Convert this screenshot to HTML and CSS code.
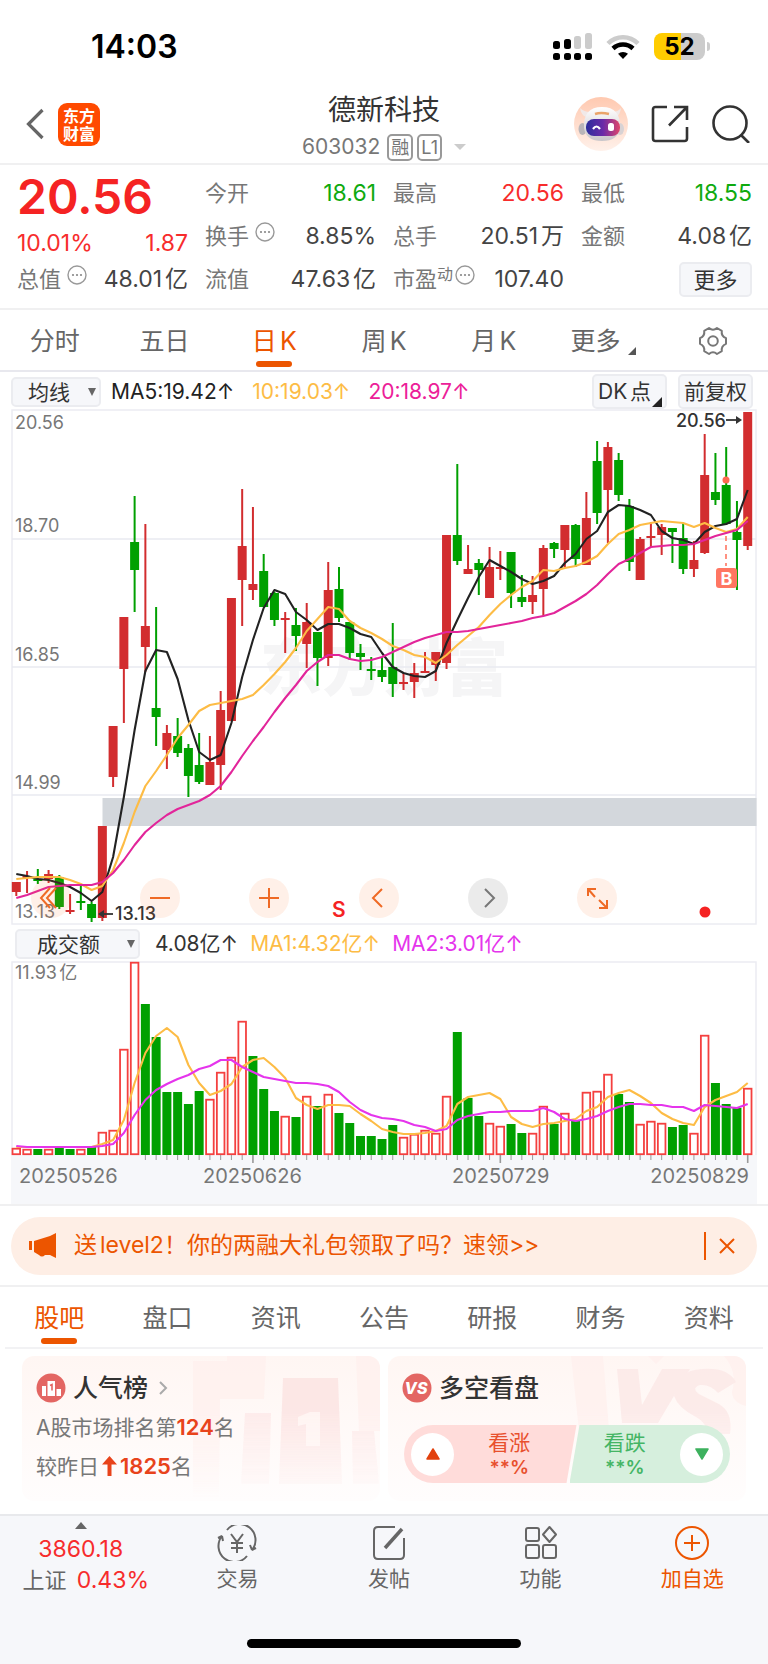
FILE: index.html
```html
<!DOCTYPE html>
<html lang="zh-CN">
<head>
    <meta charset="UTF-8">
    <meta name="viewport" content="width=device-width, initial-scale=1.0">
    <title>德新科技 603032</title>
    <link rel="stylesheet" href="styles.css">
</head>
<body>
    <svg width="0" height="0" class="sprite" aria-hidden="true">
        <symbol id="dots" viewBox="0 0 20 20">
            <circle cx="10" cy="10" r="9" fill="none" stroke="#999" stroke-width="1.4"/>
            <circle cx="6" cy="10" r="1.1" fill="#888"/>
            <circle cx="10" cy="10" r="1.1" fill="#888"/>
            <circle cx="14" cy="10" r="1.1" fill="#888"/>
        </symbol>
    </svg>

    <div class="status-bar">
        <span class="time">14:03</span>
        <div class="status-icons">
            <svg width="39" height="28" viewBox="0 0 39 28">
                <g fill="#000">
                    <rect x="0" y="8" width="7" height="8" rx="2.5"/>
                    <rect x="11" y="6" width="7" height="10" rx="2.5"/>
                    <rect x="0" y="20" width="7" height="7" rx="2.5"/>
                    <rect x="11" y="20" width="7" height="7" rx="2.5"/>
                    <rect x="21" y="20" width="7" height="7" rx="2.5"/>
                    <rect x="32" y="20" width="7" height="7" rx="2.5"/>
                </g>
                <rect x="21" y="3" width="7" height="13" rx="2.5" fill="#ccc"/>
                <rect x="32" y="0" width="7" height="16" rx="2.5" fill="#ccc"/>
            </svg>
            <svg width="34" height="26" viewBox="0 0 34 26" fill="none">
                <path d="M2 9.500A21 21 0 0 1 32 9.500" stroke="#ccc" stroke-width="4.500"/>
                <path d="M7 14.500A14.500 14.500 0 0 1 27 14.500" stroke="#000" stroke-width="4.500"/>
                <path d="M17 25l-5-5.200a7.500 7.500 0 0 1 10 0z" fill="#000"/>
            </svg>
            <div class="battery"><span>52</span></div>
        </div>
    </div>

    <header class="header">
        <div class="header-left">
            <button class="icon-btn" aria-label="返回">
                <svg width="18" height="32" viewBox="0 0 18 32" fill="none" stroke="#666" stroke-width="3.200"><path d="M16.500 2L2.500 16l14 14"/></svg>
            </button>
            <a href="#" class="logo">东方<br>财富</a>
        </div>
        <div class="header-title">
            <h1>德新科技</h1>
            <div class="code">603032 <span class="tag">融</span><span class="tag">L1</span><i class="caret"></i></div>
        </div>
        <div class="header-right">
            <button class="icon-btn" aria-label="助手">
                <svg width="54" height="54" viewBox="0 0 54 54">
                    <defs>
                        <linearGradient id="halo" x1="0" y1="0" x2="0" y2="1"><stop offset="0" stop-color="#ffc9b0"/><stop offset="1" stop-color="#fff1ea"/></linearGradient>
                        <linearGradient id="visor"><stop offset="0" stop-color="#2b2d9c"/><stop offset=".5" stop-color="#6a2ba8"/><stop offset="1" stop-color="#e0466a"/></linearGradient>
                        <linearGradient id="shell" x1="0" y1="0" x2="0" y2="1"><stop offset="0" stop-color="#fff"/><stop offset="1" stop-color="#c9c6ca"/></linearGradient>
                    </defs>
                    <circle cx="27" cy="27" r="27" fill="url(#halo)"/>
                    <path d="M6 11q1 7 6 9l4-5q-6 0-10-4zM47 11q-1 7-5 9l-4-5q6 0 9-4z" fill="#f1e9e8"/>
                    <ellipse cx="8.500" cy="32" rx="4" ry="6" fill="#b9b5b9"/>
                    <ellipse cx="46" cy="32" rx="4" ry="6" fill="#d8d2d4"/>
                    <path d="M10 31Q9 10 28 10T46 31Q44 44 28 44T10 31z" fill="url(#shell)"/>
                    <path d="M21 17q6-2 14 0" stroke="#eaa46a" stroke-width="2.500" fill="none"/>
                    <rect x="12" y="22" width="34" height="17" rx="8" fill="url(#visor)"/>
                    <path d="M19 32q3.500-5 7 0" stroke="#fff" stroke-width="2.200" fill="none"/>
                    <rect x="34" y="26" width="6" height="8" rx="2.500" fill="#fff"/>
                </svg>
            </button>
            <button class="icon-btn" aria-label="分享">
                <svg width="38" height="38" viewBox="0 0 38 38" fill="none" stroke="#333" stroke-width="2.600"><path d="M16 2H4.500Q2 2 2 4.500v29Q2 36 4.500 36h29q2.500 0 2.500-2.500V22M23 2h13v13M36 2L18 20.500"/></svg>
            </button>
            <button class="icon-btn" aria-label="搜索">
                <svg width="38" height="38" viewBox="0 0 38 38" fill="none" stroke="#333" stroke-width="2.600"><circle cx="18" cy="18" r="16.500"/><path d="M29.500 30.500L37 38"/></svg>
            </button>
        </div>
    </header>

    <section class="quote">
        <div class="quote-col">
            <div class="price">20.56</div>
            <div class="change"><span>10.01%</span><span>1.87</span></div>
            <div class="quote-row"><span class="label">总值<svg class="dots"><use href="#dots"/></svg></span><span>48.01亿</span></div>
        </div>
        <div class="quote-col">
            <div class="quote-row"><span class="label">今开</span><span class="green">18.61</span></div>
            <div class="quote-row"><span class="label">换手<svg class="dots"><use href="#dots"/></svg></span><span>8.85%</span></div>
            <div class="quote-row"><span class="label">流值</span><span>47.63亿</span></div>
        </div>
        <div class="quote-col">
            <div class="quote-row"><span class="label">最高</span><span class="red">20.56</span></div>
            <div class="quote-row"><span class="label">总手</span><span>20.51万</span></div>
            <div class="quote-row"><span class="label">市盈<small>动</small><svg class="dots"><use href="#dots"/></svg></span><span>107.40</span></div>
        </div>
        <div class="quote-col">
            <div class="quote-row"><span class="label">最低</span><span class="green">18.55</span></div>
            <div class="quote-row"><span class="label">金额</span><span>4.08亿</span></div>
            <div class="quote-row"><span></span><button class="more-btn">更多</button></div>
        </div>
    </section>

    <nav class="tabs period-tabs">
        <a href="#">分时</a>
        <a href="#">五日</a>
        <a href="#" class="active">日K</a>
        <a href="#">周K</a>
        <a href="#">月K</a>
        <a href="#" class="with-corner">更多<i class="corner"></i></a>
        <a href="#" aria-label="设置">
            <svg width="30" height="30" viewBox="0 0 30 30" fill="none" stroke="#777" stroke-width="2" stroke-linejoin="round"><path d="M11 2Q15 5.500 19 2L23.800 4.800Q23 10 28 12.200V17.800Q23 20 23.800 25.200L19 28Q15 24.500 11 28L6.200 25.200Q7 20 2 17.800V12.200Q7 10 6.200 4.800Z"/><circle cx="15" cy="15" r="4.800"/></svg>
        </a>
    </nav>

    <main class="chart">
        <div class="indicator">
            <div class="select">
                <select aria-label="主图指标"><option>均线</option></select>
            </div>
            <span class="ma5">MA5:19.42↑</span>
            <span class="ma10">10:19.03↑</span>
            <span class="ma20">20:18.97↑</span>
            <div class="indicator-btns">
                <button>DK点<i class="corner"></i></button>
                <button>前复权</button>
            </div>
        </div>

        <div class="kline">
            <svg id="kline" viewBox="11 409 746 516"></svg>
            <div class="kline-tools">
                <button aria-label="最左"><svg viewBox="0 0 40 40"><path d="M19 10l-9 10 9 10M25 10l-9 10 9 10"/></svg></button>
                <button aria-label="缩小"><svg viewBox="0 0 40 40"><path d="M10 20h20"/></svg></button>
                <button aria-label="放大"><svg viewBox="0 0 40 40"><path d="M10 20h20M20 10v20"/></svg></button>
                <button aria-label="左移"><svg viewBox="0 0 40 40"><path d="M23 11l-9 9 9 9"/></svg></button>
                <button aria-label="右移" class="disabled"><svg viewBox="0 0 40 40"><path d="M17 11l9 9-9 9"/></svg></button>
                <button aria-label="全屏"><svg viewBox="0 0 40 40"><path d="M11 18v-7h8M11 11l7 8M22 22l7 7M30 22v8h-8"/></svg></button>
            </div>
        </div>

        <div class="indicator volume-indicator">
            <div class="select">
                <select aria-label="副图指标"><option>成交额</option></select>
            </div>
            <span class="amount">4.08亿↑</span>
            <span class="ma10 vol-ma1">MA1:4.32亿↑</span>
            <span class="vol-ma2">MA2:3.01亿↑</span>
        </div>
        <svg id="volume" viewBox="11 961 746 243"></svg>
    </main>

    <div class="banner-wrap">
        <div class="banner">
            <svg width="28" height="26" viewBox="0 0 28 26" fill="#ec5500"><path d="M0 8h3v9H0zM5 8l16-5 6-3v25l-6-3h-5q-3 3-6 0l-5-3z"/></svg>
            <a href="#">送level2！你的两融大礼包领取了吗？速领&gt;&gt;</a>
            <button class="close" aria-label="关闭">
                <svg width="16" height="16" viewBox="0 0 16 16" stroke="#ec5500" stroke-width="2"><path d="M1 1l14 14M15 1L1 15"/></svg>
            </button>
        </div>
    </div>

    <nav class="tabs info-tabs">
        <a href="#" class="active">股吧</a>
        <a href="#">盘口</a>
        <a href="#">资讯</a>
        <a href="#">公告</a>
        <a href="#">研报</a>
        <a href="#">财务</a>
        <a href="#">资料</a>
    </nav>

    <section class="cards">
        <article class="card">
            <svg class="card-bg" viewBox="0 0 190 144">
                <path d="M3 5h34V0h39l-2 43H30l-1 101H3z" fill="#fff0ee"/>
                <path d="M166 0h24v75h-21z" fill="#fff0ee"/>
                <g fill="#fce3e2">
                    <path d="M55 57h26l-2 71H51z" opacity=".7"/>
                    <path d="M93 22h55l4 106H89z"/>
                    <path d="M162 75h22l5 53h-26z" opacity=".7"/>
                </g>
                <path d="M108 61l12-5h10v34h-14V68l-8 2z" fill="#fff3f1"/>
            </svg>
            <h2>
                <svg width="30" height="30" viewBox="0 0 30 30"><circle cx="15" cy="15" r="14.500" fill="#e36663"/><path d="M6 13h4v10H6zM11.500 8h7.500v15h-7.500zM20.500 16H25v7h-4.500z" fill="#fff"/><path d="M14 12.500l2-1v6" stroke="#e36663" stroke-width="1.600" fill="none"/></svg>
                人气榜
                <svg width="9" height="14" viewBox="0 0 9 14" class="arrow" fill="none" stroke="#aaa" stroke-width="2"><path d="M1 1l6 6-6 6"/></svg>
            </h2>
            <p>A股市场排名第<b>124</b>名</p>
            <p>较昨日<svg width="15" height="20" viewBox="0 0 15 20" fill="#e8431b"><path d="M7.500 0L15 8.500H9.500V20h-4V8.500H0z"/></svg><b>1825</b>名</p>
        </article>
        <article class="card">
            <svg class="card-bg" viewBox="0 0 190 144">
                <path d="M15 0h32l6 74-30 0z" fill="#fff0ee"/>
                <path d="M92 0h16l-8 8zM168 0h22v50q-14-4-14-14 6-20-8-36z" fill="#fff0ee"/>
                <path d="M61 13h21l4 36 20-36h28L102 67H66z" fill="#fce8e7"/>
                <path d="M146 13q26-2 34 13l-18 11q-8-9-18-8-9 3-1 9l20 10q14 8 11 30h-22q-2-12-12-17-18-9-22-21 2-26 28-27z" fill="#fce8e7"/>
            </svg>
            <h2>
                <svg width="30" height="30" viewBox="0 0 30 30"><circle cx="15" cy="15" r="14.500" fill="#e36663"/><text x="14" y="21" class="vs">VS</text></svg>
                多空看盘
            </h2>
            <div class="vote">
                <button class="up">
                    <i><svg width="14" height="12" viewBox="0 0 14 12"><path d="M7 1l6 10H1z" fill="#e2410e" stroke="#e2410e" stroke-width="1.500" stroke-linejoin="round"/></svg></i>
                    <span>看涨<b>**%</b></span>
                </button>
                <button class="down">
                    <span>看跌<b>**%</b></span>
                    <i><svg width="14" height="12" viewBox="0 0 14 12"><path d="M7 11L1 1h12z" fill="#3db15e" stroke="#3db15e" stroke-width="1.500" stroke-linejoin="round"/></svg></i>
                </button>
            </div>
        </article>
    </section>

    <footer class="bottom-bar">
        <nav>
            <a href="#" class="index">
                <span class="index-value"><i class="up-caret"></i><em class="red">3860.18</em></span>
                <span>上证 <em class="red percent">0.43%</em></span>
            </a>
            <a href="#">
                <svg width="40" height="36" viewBox="0 0 40 36" fill="none" stroke="#666" stroke-width="2"><path d="M10 5A16 16 0 0 1 35 25l4-2M35 25l-2-5M30 31A16 16 0 0 1 5 11L1 13M5 11l1 5M14 9l6 8 6-8M20 17v11M14 18h12M14 23h12"/></svg>
                交易
            </a>
            <a href="#">
                <svg width="34" height="36" viewBox="0 0 34 36" fill="none" stroke="#666" stroke-width="2"><path d="M23 2H6Q2 2 2 6v24q0 4 4 4h22q4 0 4-4V13"/><path d="M13 23L30 4" stroke-width="3.500"/></svg>
                发帖
            </a>
            <a href="#">
                <svg width="34" height="36" viewBox="0 0 34 36" fill="none" stroke="#666" stroke-width="2"><rect x="2" y="3" width="13" height="13" rx="2"/><rect x="2" y="20" width="13" height="13" rx="2"/><rect x="19" y="20" width="13" height="13" rx="2"/><path d="M25.500 2l6.500 7.500-6.500 7.500-6.500-7.500z" stroke-linejoin="round"/></svg>
                功能
            </a>
            <a href="#" class="add">
                <svg width="36" height="36" viewBox="0 0 36 36" fill="none" stroke="#ec5500" stroke-width="2"><circle cx="18" cy="18" r="16"/><path d="M10 18h16M18 10v16"/></svg>
                加自选
            </a>
        </nav>
        <div class="home-indicator"></div>
    </footer>

    <script src="script.js"></script>
</body>
</html>
```

FILE: styles.css
```css
* {
    box-sizing: border-box;
}
body {
    margin: 0;
    background: #fff;
    color: #444;
    font-family: Inter, "Noto Sans CJK SC", sans-serif;
    font-size: 22px;
    line-height: 1.3;
    text-autospace: normal;
}
a {
    color: inherit;
    text-decoration: none;
}
button, select {
    margin: 0;
    padding: 0;
    border: 0;
    background: none;
    color: #333;
    font: inherit;
}
h1, h2, p {
    margin: 0;
    font-weight: 400;
}
i, em {
    font-style: normal;
}
.sprite {
    position: absolute;
}
.red {
    color: #f72c2c;
}
.green {
    color: #0faa0f;
}

/* status bar */
.status-bar {
    display: flex;
    justify-content: space-between;
    align-items: center;
    height: 92px;
    padding: 1px 57px 0 91px;
    color: #000;
}
.time {
    font-size: 32px;
    font-weight: 600;
}
.status-icons {
    display: flex;
    align-items: center;
    gap: 14px;
}
.battery {
    position: relative;
    width: 51px;
    height: 27px;
    margin-right: 6px;
    border-radius: 8px;
    background: linear-gradient(90deg, #fc0 52%, #ccc 52%);
    font-size: 24px;
    font-weight: 700;
    line-height: 27px;
    text-align: center;
}
.battery::after {
    content: "";
    position: absolute;
    top: 9px;
    right: -5px;
    width: 3px;
    height: 9px;
    border-radius: 0 3px 3px 0;
    background: #ccc;
}

/* header */
.header {
    display: grid;
    grid-template-columns: 1fr auto 1fr;
    height: 73px;
    padding: 0 18px;
    border-bottom: 2px solid #f0f0f1;
}
.header-left, .header-right {
    display: flex;
    align-items: center;
    height: 64px;
}
.header-left {
    gap: 14px;
    padding-left: 8px;
}
.header-right {
    justify-content: flex-end;
    gap: 23px;
}
.icon-btn svg {
    display: block;
}
.logo {
    width: 42px;
    height: 43px;
    padding-top: 4px;
    border-radius: 9px;
    background: #ff4a00;
    color: #fff;
    font-size: 16px;
    font-weight: 700;
    line-height: 18px;
    text-align: center;
}
.header-title {
    text-align: center;
}
.header-title h1 {
    color: #333;
    font-size: 28px;
    line-height: 36px;
}
.code {
    display: flex;
    align-items: center;
    height: 38px;
    color: #777;
    font-size: 21px;
}
.tag {
    height: 27px;
    margin-left: 4px;
    padding: 0 2px;
    border: 2px solid #999;
    border-radius: 5px;
    font-size: 18px;
    line-height: 23px;
}
.code .tag:first-child {
    margin-left: 7px;
}
.caret {
    margin-left: 12px;
    border: 6px solid transparent;
    border-top-color: #ccc;
    border-bottom: 0;
}

/* quote */
.quote {
    display: grid;
    grid-template-columns: repeat(4, 1fr);
    gap: 17px;
    padding: 7px 16px 7px 17px;
    border-bottom: 2px solid #f0f0f1;
}
.quote-row {
    display: flex;
    justify-content: space-between;
    align-items: center;
    height: 43px;
    font-size: 23px;
    white-space: nowrap;
}
.label {
    display: flex;
    align-items: center;
    color: #777;
    font-size: 22px;
}
.label small {
    height: 32px;
    font-size: 16px;
    line-height: 20px;
}
.dots {
    width: 20px;
    height: 20px;
    margin: 0 0 9px 6px;
}
small + .dots {
    margin-left: 2px;
}
.price {
    height: 52px;
    color: #f52323;
    font-size: 48px;
    font-weight: 600;
    line-height: 50px;
}
.change {
    display: flex;
    justify-content: space-between;
    height: 34px;
    color: #f72c2c;
    font-size: 23px;
    line-height: 38px;
}
.more-btn {
    width: 73px;
    height: 35px;
    border: 2px solid #ebecf0;
    border-radius: 5px;
    background: #f6f7fa;
    font-size: 22px;
    line-height: 30px;
}

/* tabs */
.tabs {
    display: flex;
    height: 62px;
    color: #666;
    font-size: 25px;
}
.tabs a {
    display: flex;
    position: relative;
    flex: 1;
    align-items: center;
    justify-content: center;
    gap: 2px;
    padding-top: 2px;
}
.tabs .active {
    color: #ec5500;
}
.tabs .active::after {
    content: "";
    position: absolute;
    bottom: 3px;
    left: calc(50% - 18px);
    width: 36px;
    height: 6px;
    border-radius: 3px;
    background: #ec5500;
}
.period-tabs {
    border-bottom: 2px solid #e8e8ee;
}
.corner {
    border: 4px solid transparent;
    border-right-color: #555;
    border-bottom-color: #555;
}
.with-corner .corner {
    margin: 20px 0 0 6px;
}

/* chart */
.chart {
    padding: 0 11px;
}
.chart svg {
    display: block;
    width: 100%;
}
.indicator {
    display: flex;
    position: relative;
    align-items: center;
    height: 37px;
    padding-top: 2px;
    font-size: 21px;
    white-space: nowrap;
}
.indicator > span {
    text-autospace: no-autospace;
}
.select {
    position: relative;
}
.select select {
    width: 90px;
    height: 30px;
    padding-left: 15px;
    border: 2px solid #ebecf0;
    border-radius: 5px;
    background: #f6f7fa;
    appearance: none;
}
.select::after {
    content: "";
    position: absolute;
    top: 11px;
    right: 5px;
    border: 4px solid transparent;
    border-top: 8px solid #666;
    border-bottom: 0;
    pointer-events: none;
}
.ma5 {
    margin-left: 10px;
    color: #222;
}
.ma10 {
    margin-left: 18px;
    color: #fdbc45;
}
.ma20 {
    margin-left: 18px;
    color: #ec2098;
}
.indicator-btns {
    display: flex;
    gap: 11px;
    margin: 0 4px 0 auto;
}
.indicator-btns button {
    position: relative;
    width: 75px;
    height: 35px;
    border: 2px solid #ebecf0;
    border-radius: 5px;
    background: #f6f7fa;
}
.indicator-btns button:first-child {
    padding-right: 10px;
}
.indicator-btns .corner {
    position: absolute;
    right: 3px;
    bottom: 0;
    border-width: 5px;
    border-right-color: #222;
    border-bottom-color: #222;
}
.kline {
    position: relative;
}
.kline-tools {
    display: flex;
    position: absolute;
    right: 18.8%;
    bottom: 7px;
    left: 2.7%;
    justify-content: space-between;
}
.kline-tools button {
    width: 40px;
    height: 40px;
    border-radius: 50%;
    background: rgba(255, 120, 50, .11);
}
.kline-tools svg {
    fill: none;
    stroke: #ef6a25;
    stroke-width: 2;
}
.kline-tools .disabled {
    background: rgba(0, 0, 0, .08);
}
.kline-tools .disabled svg {
    stroke: #777;
}
.volume-indicator {
    height: 36px;
    padding-left: 4px;
}
.volume-indicator select {
    width: 125px;
    padding-left: 20px;
}
.amount {
    margin-left: 15px;
    color: #333;
}
.vol-ma1 {
    margin-left: 12px;
}
.vol-ma2 {
    margin-left: 12px;
    color: #e534ec;
}
.chart text {
    fill: #777;
    font-size: 18px;
}
.chart .dates {
    font-size: 20px;
}
.chart .note {
    fill: #333;
    font-weight: 500;
}
.chart .watermark {
    fill: #f5f5f6;
    font-size: 62px;
    font-weight: 900;
}
.chart .sell {
    fill: #f52323;
    font-size: 21px;
    font-weight: 600;
}
.chart .buy {
    fill: #fff;
    font-weight: 700;
}

/* banner */
.banner-wrap {
    padding: 11px 11px 10px;
    border-top: 2px solid #f0f0f1;
    border-bottom: 2px solid #f0f0f1;
}
.banner {
    display: flex;
    align-items: center;
    height: 58px;
    padding: 0 22px 0 18px;
    border-radius: 29px;
    background: #feeee5;
    color: #ec5500;
    font-size: 23px;
}
.banner a {
    flex: 1;
    margin-left: 17px;
    white-space: nowrap;
}
.close {
    height: 28px;
    padding-left: 13px;
    border-left: 2px solid #ec5500;
}
.close svg {
    display: block;
}
.info-tabs {
    margin: 0 5px;
    border-bottom: 2px solid #f2f2f4;
}

/* cards */
.cards {
    display: grid;
    grid-template-columns: 1fr 1fr;
    gap: 8px;
    padding: 7px 22px 13px;
}
.card {
    position: relative;
    height: 145px;
    padding: 12px 16px 0 14px;
    border-radius: 12px;
    background: linear-gradient(#fff6f3, #fffdfd);
    color: #777;
    font-size: 21px;
    overflow: hidden;
}
.card-bg {
    position: absolute;
    top: 0;
    right: 0;
    width: 190px;
    height: 144px;
    opacity: .8;
    mask-image: linear-gradient(#000 40%, transparent);
}
.card h2 {
    display: flex;
    position: relative;
    align-items: center;
    gap: 7px;
    height: 40px;
    color: #333;
    font-size: 25px;
    font-weight: 500;
}
.card h2 .arrow {
    margin-left: 4px;
}
.vs {
    fill: #fff;
    font-size: 16px;
    font-style: italic;
    font-weight: 800;
    text-anchor: middle;
}
.card p {
    position: relative;
    height: 39px;
    line-height: 39px;
    text-autospace: no-autospace;
}
.card p svg {
    margin: 0 3px -2px;
}
.card b {
    color: #e8431b;
    font-size: 22px;
    font-weight: 600;
}
.vote {
    display: flex;
    position: relative;
    height: 58px;
    margin-top: 17px;
    margin-left: 2px;
}
.vote button {
    display: flex;
    flex: 1;
    align-items: center;
    padding: 0 7px;
}
.vote i {
    display: flex;
    align-items: center;
    justify-content: center;
    width: 43px;
    height: 43px;
    border-radius: 50%;
    background: #fff;
}
.vote span {
    flex: 1;
    line-height: 27px;
}
.vote b {
    display: block;
    color: inherit;
    font-size: 19px;
    line-height: 24px;
}
.vote .up {
    padding-right: 12px;
    border-radius: 29px 0 0 29px;
    background: #ffdcda;
    color: #e8502d;
    clip-path: polygon(0 0, 100% 0, calc(100% - 10px) 100%, 0 100%);
}
.vote .down {
    margin-left: -7px;
    padding-left: 0;
    border-radius: 0 29px 29px 0;
    background: #d6efdd;
    color: #45b565;
    clip-path: polygon(10px 0, 100% 0, 100% 100%, 0 100%);
}

/* bottom bar */
.bottom-bar {
    height: 150px;
    padding-left: 10px;
    border-top: 2px solid #e8e9ec;
    background: #f6f7fa;
}
.bottom-bar nav {
    display: flex;
}
.bottom-bar nav a {
    display: flex;
    flex: 1;
    flex-direction: column;
    align-items: center;
    padding-top: 9px;
    color: #666;
    font-size: 21px;
    line-height: 36px;
}
.bottom-bar nav .index {
    padding-top: 6px;
    font-size: 22px;
    line-height: 31px;
    white-space: nowrap;
}
.index-value {
    display: flex;
    flex-direction: column;
    align-items: center;
    padding-right: 10px;
}
.index .red {
    font-size: 23px;
}
.index .percent {
    margin-left: 4px;
}
.up-caret {
    margin-bottom: 5px;
    border: 6px solid transparent;
    border-top: 0;
    border-bottom: 7px solid #666;
}
.bottom-bar nav .add {
    color: #ec5500;
}
.home-indicator {
    width: 274px;
    height: 9px;
    margin: 42px auto 0;
    border-radius: 5px;
    background: #000;
    transform: translateX(-5px);
}
```

FILE: script.js
```javascript
const FIRST_X = 16.3;
const STEP = 10.756;
const RED = '#d22d2f';
const GREEN = '#00a000';

// high, body top, body bottom, low, r/g
const candles = [
    [882, 882, 892, 896, 'r'], [871, 876, 878, 893, 'r'], [869, 879, 880, 884, 'g'], [870, 874, 879, 883, 'r'],
    [875, 877, 907, 909, 'g'], [894, 910, 911, 914, 'r'], [886, 901, 903, 910, 'g'], [902, 904, 918, 922, 'g'],
    [826, 826, 918, 921, 'r'], [726, 726, 777, 787, 'r'], [617, 617, 669, 723, 'r'], [496, 542, 570, 612, 'g'],
    [524, 626, 647, 672, 'r'], [607, 708, 717, 746, 'g'], [725, 733, 750, 769, 'r'], [718, 736, 753, 757, 'g'],
    [744, 748, 776, 797, 'g'], [733, 765, 782, 784, 'g'], [736, 762, 785, 785, 'r'], [691, 710, 765, 790, 'r'],
    [598, 598, 721, 721, 'r'], [489, 546, 580, 626, 'r'], [507, 584, 590, 600, 'r'], [554, 571, 607, 607, 'g'],
    [592, 593, 620, 626, 'g'], [612, 618, 620, 653, 'r'], [608, 625, 636, 651, 'g'], [603, 622, 644, 668, 'r'],
    [632, 632, 658, 686, 'g'], [562, 590, 658, 666, 'r'], [567, 589, 618, 622, 'g'], [622, 622, 653, 660, 'g'],
    [644, 653, 657, 670, 'g'], [657, 669, 670, 680, 'g'], [657, 670, 677, 682, 'g'], [623, 667, 684, 697, 'g'],
    [673, 682, 684, 690, 'r'], [663, 673, 682, 698, 'r'], [652, 671, 673, 673, 'r'], [652, 652, 665, 681, 'r'],
    [535, 535, 663, 669, 'r'], [464, 535, 561, 565, 'g'], [545, 569, 574, 574, 'r'], [559, 563, 570, 595, 'g'],
    [547, 567, 598, 598, 'r'], [551, 567, 568, 580, 'r'], [552, 552, 593, 608, 'g'], [575, 597, 602, 607, 'g'],
    [576, 595, 602, 614, 'r'], [545, 548, 589, 616, 'r'], [542, 543, 549, 558, 'g'], [525, 525, 550, 567, 'r'],
    [524, 525, 559, 567, 'g'], [492, 518, 565, 565, 'r'], [441, 461, 513, 524, 'g'], [442, 447, 490, 543, 'r'],
    [453, 460, 495, 501, 'g'], [499, 506, 562, 571, 'g'], [537, 539, 580, 580, 'r'], [522, 536, 538, 547, 'r'],
    [524, 527, 535, 555, 'r'], [528, 528, 532, 563, 'g'], [523, 538, 569, 574, 'g'], [541, 560, 569, 577, 'r'],
    [434, 475, 553, 554, 'r'], [453, 492, 500, 505, 'g'], [447, 485, 524, 525, 'g'], [501, 532, 540, 590, 'g'],
    [412, 412, 546, 550, 'r']
];

const ma5 = [874, 876, 879, 880, 883, 887, 893, 901, 892, 857, 797, 730, 671, 650, 652, 679, 720, 752, 760, 755, 723, 677, 640, 608, 590, 594, 612, 620, 630, 624, 624, 628, 634, 637, 653, 667, 673, 676, 677, 671, 643, 620, 598, 577, 560, 566, 572, 579, 584, 581, 576, 563, 554, 539, 531, 512, 505, 506, 510, 515, 531, 538, 540, 544, 532, 526, 524, 519, 490];
const ma10 = [879, 878, 877, 877, 877, 880, 884, 890, 886, 870, 843, 812, 786, 771, 755, 738, 725, 711, 705, 703, 701, 699, 695, 685, 674, 662, 648, 631, 619, 607, 609, 621, 628, 633, 639, 646, 650, 655, 657, 663, 655, 645, 636, 627, 615, 604, 595, 587, 581, 570, 571, 568, 566, 562, 556, 544, 534, 530, 525, 523, 521, 522, 523, 527, 523, 528, 532, 529, 517];
const ma20 = [898, 895, 891, 887, 886, 885, 885, 885, 882, 873, 860, 845, 832, 823, 815, 809, 805, 801, 795, 786, 772, 756, 741, 727, 712, 698, 685, 671, 662, 655, 655, 659, 661, 660, 657, 652, 647, 642, 638, 635, 632, 632, 631, 629, 627, 625, 623, 621, 618, 616, 613, 607, 601, 594, 585, 574, 564, 559, 553, 547, 546, 545, 545, 544, 540, 536, 533, 530, 521];

const volumes = [1148, 1149, 1149, 1149, 1148, 1149, 1149, 1147, 1132, 1130, 1049, 962, 1004, 1037, 1092, 1092, 1104, 1091, 1099, 1072, 1057, 1021, 1056, 1089, 1111, 1116, 1117, 1096, 1106, 1094, 1113, 1123, 1136, 1136, 1139, 1125, 1137, 1134, 1130, 1133, 1096, 1032, 1098, 1116, 1123, 1126, 1124, 1133, 1133, 1106, 1124, 1113, 1121, 1092, 1091, 1074, 1094, 1102, 1124, 1121, 1123, 1127, 1125, 1133, 1035, 1083, 1104, 1108, 1088];
const volumeColors = 'rrgrggrgrrrrggggggrrrrgggrgrgrgggggg' + 'rrrrrgggrrggrrgrgrrrggrrrggrrgggr';
const volMa1 = [1147, 1147, 1147, 1147, 1147, 1147, 1147, 1147, 1144, 1140, 1120, 1083, 1053, 1036, 1028, 1037, 1065, 1083, 1095, 1091, 1084, 1067, 1060, 1058, 1067, 1078, 1098, 1105, 1109, 1105, 1105, 1106, 1114, 1121, 1129, 1132, 1134, 1134, 1133, 1131, 1126, 1104, 1097, 1095, 1093, 1099, 1117, 1124, 1127, 1124, 1123, 1121, 1119, 1111, 1107, 1097, 1093, 1090, 1096, 1103, 1113, 1119, 1123, 1125, 1107, 1100, 1096, 1092, 1083];
const volMa2 = [1146, 1147, 1147, 1147, 1147, 1147, 1147, 1147, 1146, 1144, 1133, 1115, 1100, 1090, 1084, 1079, 1075, 1069, 1066, 1060, 1060, 1067, 1072, 1077, 1079, 1081, 1083, 1083, 1084, 1086, 1092, 1102, 1110, 1115, 1118, 1119, 1121, 1125, 1127, 1131, 1129, 1120, 1116, 1114, 1112, 1112, 1111, 1111, 1111, 1108, 1112, 1119, 1121, 1119, 1116, 1111, 1107, 1104, 1104, 1105, 1105, 1107, 1107, 1111, 1105, 1106, 1107, 1108, 1104];

function xOf(i) {
    return FIRST_X + i * STEP;
}

function rect(x, y, w, h, attrs) {
    return `<rect x="${x}" y="${y}" width="${w}" height="${h}" ${attrs}/>`;
}

function line(x1, y1, x2, y2, color, width) {
    return `<path d="M${x1} ${y1}L${x2} ${y2}" stroke="${color}" stroke-width="${width}" fill="none"/>`;
}

function curve(values, color) {
    const points = values.map((y, i) => `${xOf(i)},${y}`).join(' ');
    return `<polyline points="${points}" fill="none" stroke="${color}" stroke-width="2.1" stroke-linejoin="round"/>`;
}

function text(x, y, value, attrs = '') {
    return `<text x="${x}" y="${y}" ${attrs}>${value}</text>`;
}

function drawKline() {
    let out = rect(12, 410, 744, 514, 'fill="none" stroke="#ebecf2" stroke-width="1.5"');
    out += text(260, 691, '东方财富', 'class="watermark"');
    [539, 667, 795].forEach(y => out += line(12, y, 756, y, '#e9eaf0', 1.5));
    out += rect(102.5, 798, 654, 28, 'fill="#d3d7dc"');

    [[429, '20.56'], [532, '18.70'], [661, '16.85'], [789, '14.99'], [918, '13.13']].forEach(([y, v]) => out += text(15, y, v));

    candles.forEach(([high, top, bottom, low, c], i) => {
        const color = c === 'r' ? RED : GREEN;
        out += line(xOf(i), high, xOf(i), low, color, 2);
        out += rect(xOf(i) - 4.5, top, 9, Math.max(bottom - top, 2), `fill="${color}"`);
    });
    out += curve(ma5, '#222') + curve(ma10, '#fdbc45') + curve(ma20, '#e2259a');

    // high and low marks
    out += text(676, 427, '20.56', 'class="note"');
    out += line(726, 420, 740, 420, '#333', 1.8) + '<path d="M742 420l-6-4v8z" fill="#333"/>';
    out += text(115, 920, '13.13', 'class="note"');
    out += line(101, 914, 113, 914, '#333', 1.8) + '<path d="M98 914l6-4v8z" fill="#333"/>';

    // trade marks
    out += '<circle cx="726" cy="480" r="3.5" fill="#ff6a50"/>';
    out += '<path d="M726 536v30" stroke="#ff7662" stroke-width="1.6" stroke-dasharray="5 4"/>';
    out += rect(716, 568, 21, 20, 'rx="3" fill="#ff7662"') + text(726.5, 585, 'B', 'class="buy" text-anchor="middle"');
    out += text(332, 917, 'S', 'class="sell"');
    out += '<circle cx="705" cy="912" r="5.5" fill="#f52323"/>';
    document.getElementById('kline').innerHTML = out;
}

function drawVolume() {
    let out = rect(11, 1155, 746, 49, 'fill="#f6f7fa"');
    out += '<path d="M12 1155V962H756V1155" fill="none" stroke="#ebecf2" stroke-width="1.5"/>';
    out += text(15, 979, '11.93亿');

    volumes.forEach((y, i) => {
        if (volumeColors[i] === 'r') {
            out += rect(xOf(i) - 3.8, y + 0.7, 7.6, 1153.5 - y, 'fill="#fff" stroke="#f4403f" stroke-width="1.8"');
        } else {
            out += rect(xOf(i) - 4.5, y, 9, 1155 - y, `fill="${GREEN}"`);
        }
        if (i > 11) {
            const major = i === 22 || i === 45 || i === 68;
            out += line(xOf(i), 1155, xOf(i), major ? 1163 : 1160, '#999', major ? 1.6 : 1);
        }
    });
    out += curve(volMa1, '#fdbc45') + curve(volMa2, '#e534ec');

    out += text(19, 1183, '20250526', 'class="dates"');
    out += text(203, 1183, '20250626', 'class="dates"');
    out += text(452, 1183, '20250729', 'class="dates"');
    out += text(749, 1183, '20250829', 'class="dates" text-anchor="end"');
    document.getElementById('volume').innerHTML = out;
}

drawKline();
drawVolume();
```
